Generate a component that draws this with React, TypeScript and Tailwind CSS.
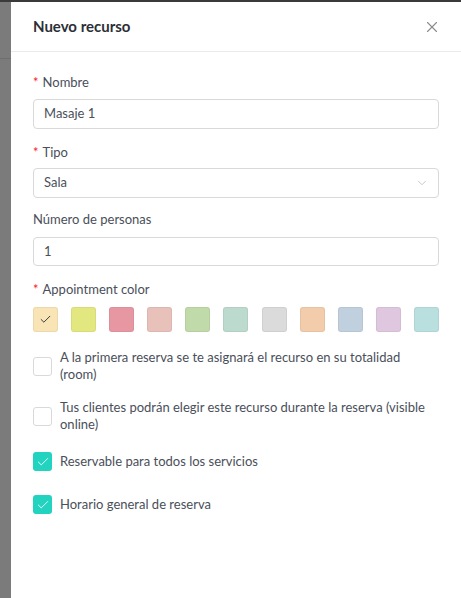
import { Check, ChevronDown, X } from "lucide-react";

const swatches = [
    "#f9e4b5",
    "#e2e87f",
    "#e797a2",
    "#e8c1bb",
    "#c0daa9",
    "#bddace",
    "#dbdbdb",
    "#f3cdab",
    "#c1d0df",
    "#dfc7e0",
    "#badfdf",
];

function Label({ text, required }: { text: string; required?: boolean }) {
    return (
        <div className="text-[13px] leading-5 text-[#4a4f5a]">
            {required && <span className="text-[#f5222d] mr-1">*</span>}
            {text}
        </div>
    );
}

function Checkbox({ checked, label }: { checked?: boolean; label: string }) {
    return (
        <div className="flex items-center gap-2">
            <div
                className={
                    checked
                        ? "w-[19px] h-[19px] shrink-0 rounded-[3px] bg-[#22d3bf] flex items-center justify-center"
                        : "w-[19px] h-[19px] shrink-0 rounded-[3px] border border-[#d9d9d9] bg-white"
                }
            >
                {checked && <Check className="w-[14px] h-[14px] text-white" strokeWidth={1.5} />}
            </div>
            <p className="text-[13px] leading-[17px] text-[#4a4f5a]">{label}</p>
        </div>
    );
}

export default function App() {
    return (
        <div className="w-[461px] h-[598px] flex bg-white" style={{ fontFamily: "Lato, 'Open Sans', sans-serif" }}>
            {/* Backdrop strip */}
            <div className="w-3 h-full bg-[#7b7b7b] border-t-2 border-[#3a3a3a] flex flex-col">
                <div className="h-[56px]" />
                <div className="h-px bg-[#6e6e6e]" />
            </div>

            {/* Drawer */}
            <div className="flex-1 h-full border-t-2 border-[#3a3a3a] flex flex-col">
                <div className="h-[50px] px-[22px] flex items-center justify-between border-b border-[#ebebeb]">
                    <h2 className="text-[15px] font-bold text-[#2c2f36]">Nuevo recurso</h2>
                    <X className="w-[18px] h-[18px] text-[#8c8c8c] mr-[-2px]" strokeWidth={1.5} />
                </div>

                <div className="px-[22px] pt-[20px] flex flex-col">
                    <Label text="Nombre" required />
                    <div className="mt-[7px] h-[30px] w-[406px] border border-[#d9d9d9] rounded-[4px] px-[10px] flex items-center text-[13px] text-[#4a4f5a]">
                        Masaje 1
                    </div>

                    <div className="mt-[13px]">
                        <Label text="Tipo" required />
                    </div>
                    <div className="mt-[6px] h-[30px] w-[406px] border border-[#d9d9d9] rounded-[4px] px-[10px] flex items-center justify-between text-[13px] text-[#4a4f5a]">
                        Sala
                        <ChevronDown className="w-[14px] h-[14px] text-[#c0c0c0] mr-[-1px]" strokeWidth={1.5} />
                    </div>

                    <div className="mt-[11px]">
                        <Label text="Número de personas" />
                    </div>
                    <div className="mt-[8px] h-[29px] w-[406px] border border-[#d9d9d9] rounded-[4px] px-[10px] flex items-center text-[13px] text-[#4a4f5a]">
                        1
                    </div>

                    <div className="mt-[13px]">
                        <Label text="Appointment color" required />
                    </div>
                    <div className="mt-[8px] w-[406px] flex justify-between">
                        {swatches.map((c, i) => (
                            <div
                                key={c}
                                className="w-[25px] h-[25px] rounded-[3px] border border-black/5 flex items-center justify-center"
                                style={{ backgroundColor: c }}
                            >
                                {i === 0 && <Check className="w-[13px] h-[13px] text-[#3a3a3a]" strokeWidth={1.8} />}
                            </div>
                        ))}
                    </div>

                    <div className="mt-[17px] flex flex-col">
                        <Checkbox label="A la primera reserva se te asignará el recurso en su totalidad (room)" />
                        <div className="mt-4">
                            <Checkbox label="Tus clientes podrán elegir este recurso durante la reserva (visible online)" />
                        </div>
                        <div className="mt-[19px]">
                            <Checkbox checked label="Reservable para todos los servicios" />
                        </div>
                        <div className="mt-6">
                            <Checkbox checked label="Horario general de reserva" />
                        </div>
                    </div>
                </div>
            </div>
        </div>
    );
}
